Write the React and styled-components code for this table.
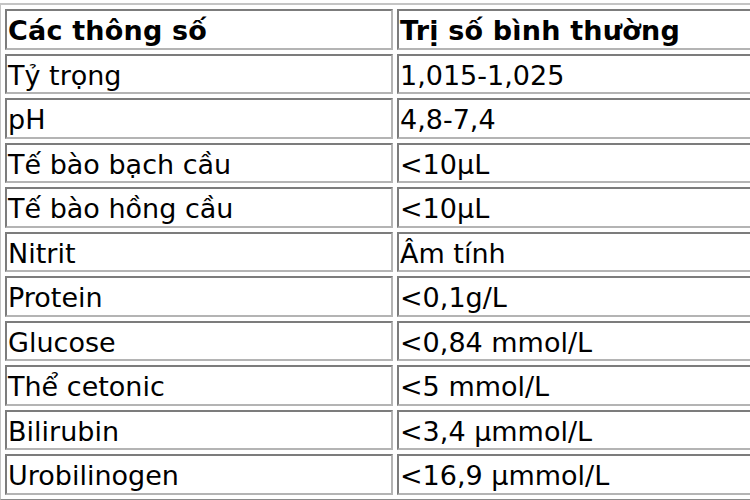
import React from 'react';
import styled, {createGlobalStyle} from 'styled-components';

const GlobalStyle = createGlobalStyle`
html, body {
  margin: 0;
  padding: 0;
  background: #fff;
  overflow: hidden;
}
`;

const Page = styled.div`
width: 750px;
height: 500px;
overflow: hidden;
padding-top: 3px;
box-sizing: border-box;
`;

const Table = styled.table`
width: 820px;
border-collapse: separate;
border-spacing: 4px;
border: 2px solid;
border-color: #c4c4c4 #8a8a8a #8a8a8a #c4c4c4;
margin-left: -1px;
table-layout: fixed;
font-family: "DejaVu Sans", Verdana, sans-serif;
font-size: 27px;
color: #000;
`;

const Cell = styled.td`
height: 40.5px;
box-sizing: border-box;
padding: 3px 1px 0;
border: 2px solid;
border-color: #7c7c7c #b4b4b4 #b4b4b4 #7c7c7c;
font-weight: ${p => (p.$head ? 'bold' : 'normal')};
letter-spacing: ${p => (p.$head ? '0.2px' : '0')};
white-space: nowrap;
vertical-align: middle;
line-height: 1;
`;

const LeftCol = styled.col`
width: 388px;
`;

const rows = [
  ['Tỷ trọng', '1,015-1,025'],
  ['pH', '4,8-7,4'],
  ['Tế bào bạch cầu', '<10μL'],
  ['Tế bào hồng cầu', '<10μL'],
  ['Nitrit', 'Âm tính'],
  ['Protein', '<0,1g/L'],
  ['Glucose', '<0,84 mmol/L'],
  ['Thể cetonic', '<5 mmol/L'],
  ['Bilirubin', '<3,4 µmmol/L'],
  ['Urobilinogen', '<16,9 µmmol/L'],
];

export default function App() {
  return (
    <Page>
      <GlobalStyle/>
      <Table>
        <colgroup>
          <LeftCol/>
          <col/>
        </colgroup>
        <tbody>
          <tr>
            <Cell $head>Các thông số</Cell>
            <Cell $head>Trị số bình thường</Cell>
          </tr>
          {rows.map(([name, value]) => (
            <tr key={name}>
              <Cell>{name}</Cell>
              <Cell>{value}</Cell>
            </tr>
          ))}
        </tbody>
      </Table>
    </Page>
  );
}
